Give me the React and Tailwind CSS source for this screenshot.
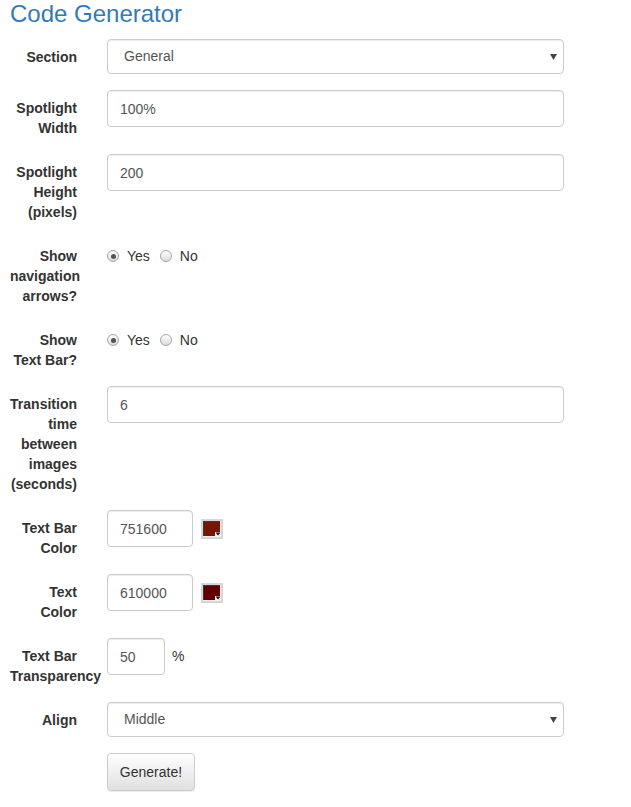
import { useState } from 'react';

const inputCls =
  'h-[37px] border border-[#ccc] rounded px-3 text-[14px] text-[#555] bg-white shadow-[inset_0_1px_1px_rgba(0,0,0,0.075)] outline-none';

function Row({ label, children }) {
  return (
    <div className="flex items-start">
      <label className="ml-[10px] w-[67px] shrink-0 pt-2 leading-5 font-bold text-right">{label}</label>
      <div className="ml-[30px] w-[457px] shrink-0">{children}</div>
    </div>
  );
}

function Select({ value, options }) {
  return (
    <div className="relative">
      <select
        defaultValue={value}
        className="appearance-none w-full h-[35px] border border-[#ccc] rounded pl-4 pr-6 text-[14px] text-[#555] bg-white shadow-[inset_0_1px_1px_rgba(0,0,0,0.075)] outline-none"
      >
        {options.map((o) => (
          <option key={o}>{o}</option>
        ))}
      </select>
      <svg className="absolute right-[7px] top-[15px] pointer-events-none" width="7" height="6" viewBox="0 0 7 6">
        <path d="M0 0 H7 L3.5 6 Z" fill="#444" />
      </svg>
    </div>
  );
}

function Radio({ checked, label, onClick }) {
  return (
    <span className="flex items-center cursor-pointer" onClick={onClick}>
      <span className="w-[12px] h-[12px] rounded-full border border-[#a6a6a6] bg-linear-to-b from-white to-[#dcdcdc] flex items-center justify-center mr-[8px]">
        {checked && <span className="w-[5px] h-[5px] rounded-full bg-[#555]" />}
      </span>
      <span className="font-normal text-[#333]">{label}</span>
    </span>
  );
}

function YesNo({ value, onChange }) {
  return (
    <div className="pt-2 leading-5 flex items-center gap-[10px]">
      <Radio checked={value} label="Yes" onClick={() => onChange(true)} />
      <Radio checked={!value} label="No" onClick={() => onChange(false)} />
    </div>
  );
}

// jscolor-style picker button
function Swatch({ color }) {
  return (
    <svg width="22" height="20" viewBox="0 0 22 20" className="ml-2 shrink-0">
      <rect x="0" y="0" width="22" height="20" fill="#d6d6d6" />
      <rect x="2" y="2" width="18" height="16" fill="#eeeeee" />
      <rect x="2" y="2" width="17" height="15" fill="#3c3c3c" />
      <rect x="3" y="3" width="16" height="14" fill={color} />
      <rect x="14" y="13" width="6" height="5" fill="#f2f2f2" />
      <path d="M14.5 13.5 H19.5 L17 16.5 Z" fill="#111" />
    </svg>
  );
}

export default function App() {
  const [arrows, setArrows] = useState(true);
  const [textBar, setTextBar] = useState(true);

  return (
    <div className="min-h-screen bg-white font-['Liberation_Sans',Arial,sans-serif] text-[14px] text-[#333]">
      <h3 className="pl-[10px] text-[24px] leading-[27px] font-normal text-[#337ab7]">Code Generator</h3>

      <form className="mt-[12px] flex flex-col gap-4" onSubmit={(e) => e.preventDefault()}>
        <Row label="Section">
          <Select value="General" options={['General', 'Advanced']} />
        </Row>

        <Row label="Spotlight Width">
          <input className={`${inputCls} w-full`} defaultValue="100%" />
        </Row>

        <Row label="Spotlight Height (pixels)">
          <input className={`${inputCls} w-full`} defaultValue="200" />
        </Row>

        <Row label="Show navigation arrows?">
          <YesNo value={arrows} onChange={setArrows} />
        </Row>

        <Row label="Show Text Bar?">
          <YesNo value={textBar} onChange={setTextBar} />
        </Row>

        <Row label="Transition time between images (seconds)">
          <input className={`${inputCls} w-full`} defaultValue="6" />
        </Row>

        <Row label="Text Bar Color">
          <div className="flex items-center">
            <input className={`${inputCls} w-[86px]`} defaultValue="751600" />
            <Swatch color="#751600" />
          </div>
        </Row>

        <Row label="Text Color">
          <div className="flex items-center">
            <input className={`${inputCls} w-[86px]`} defaultValue="610000" />
            <Swatch color="#610000" />
          </div>
        </Row>

        <Row label="Text Bar Transparency">
          <div className="flex items-start">
            <input className={`${inputCls} w-[58px]`} defaultValue="50" />
            <span className="ml-[7px] pt-2 leading-5">%</span>
          </div>
        </Row>

        <Row label="Align">
          <Select value="Middle" options={['Top', 'Middle', 'Bottom']} />
        </Row>

        <Row label="">
          <button
            type="submit"
            className="h-[38px] w-[88px] border border-[#ccc] rounded bg-linear-to-b from-white to-[#e0e0e0] text-[14px] text-[#333] shadow-[inset_0_1px_0_rgba(255,255,255,0.15),0_1px_1px_rgba(0,0,0,0.075)]"
          >
            Generate!
          </button>
        </Row>
      </form>
    </div>
  );
}
